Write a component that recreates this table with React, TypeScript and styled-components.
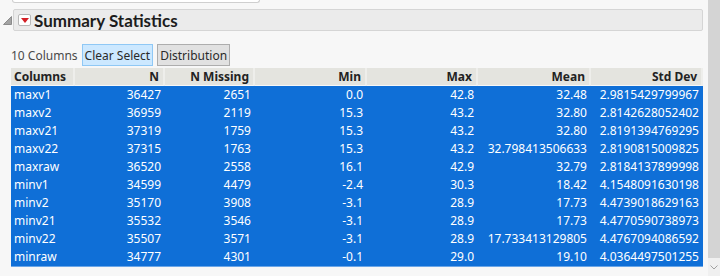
import * as React from 'react';
import styled, { createGlobalStyle } from 'styled-components';

const GlobalStyle = createGlobalStyle`
    html, body {
        margin: 0;
        padding: 0;
        background: #f7f7f7;
        font-family: 'Noto Sans', 'Open Sans', Arial, sans-serif;
    }
`;

const Window = styled.div`
    display: flex;
    flex-direction: row;
    width: 720px;
    height: 276px;
    overflow: hidden;
    background: #f7f7f7;
`;

const Main = styled.div`
    display: flex;
    flex-direction: column;
    width: 708px;
`;

const TopBox = styled.div`
    width: 246px;
    height: 2px;
    margin-left: 12px;
    background: #ffffff;
    border: 1px solid #cfcfcf;
    border-top: none;
    border-radius: 0 0 3px 3px;
`;

const OutlineRow = styled.div`
    display: flex;
    flex-direction: row;
    align-items: center;
    margin-top: 6px;
    padding-left: 3px;
    gap: 1px;
`;

const HeaderBar = styled.div`
    display: flex;
    align-items: center;
    gap: 3px;
    flex: 1;
    height: 20px;
    padding-left: 4px;
    background: #ebebeb;
    border: 1px solid #d5d5d5;
    border-radius: 2px;
    margin-right: 5px;
`;

const RedMenu = styled.div`
    display: flex;
    align-items: center;
    justify-content: center;
    width: 11px;
    height: 10px;
    background: #ffffff;
    border: 1px solid #b8b8b8;
    border-radius: 2px;
`;

const Title = styled.span`
    font-family: Lato, 'Noto Sans', sans-serif;
    font-size: 17px;
    font-weight: 700;
    color: #1c1c1c;
`;

const Content = styled.div`
    display: flex;
    flex-direction: column;
    padding-left: 11px;
    margin-top: 13px;
`;

const Toolbar = styled.div`
    display: flex;
    align-items: center;
    height: 22px;
`;

const Label = styled.span`
    font-size: 12px;
    color: #4a4a4a;
    margin-right: 4px;
`;

const ToolButton = styled.button<{ $active?: boolean }>`
    height: 22px;
    margin-right: 4px;
    padding: 0 2px;
    font-family: inherit;
    font-size: 12px;
    color: #2a2a2a;
    background: ${(p) => (p.$active ? '#cce8ff' : '#e1e1e1')};
    border: 1px solid ${(p) => (p.$active ? '#8fc8f5' : '#adadad')};
    border-radius: 0;
`;

const Grid = styled.div`
    display: grid;
    grid-template-columns: 64px 90px 90px 112px 111px 113px 112px;
    width: 692px;
    margin-top: 2px;
`;

const HeadCell = styled.div<{ $left?: boolean }>`
    height: 17px;
    line-height: 17px;
    padding: 0 4px 0 3px;
    font-size: 12px;
    font-weight: 700;
    color: #222;
    text-align: ${(p) => (p.$left ? 'left' : 'right')};
    background: #e4e4df;
    border-right: 2px solid #eeeeeb;
    border-bottom: 1px solid #f7f7f7;

    &:last-child {
        border-right: none;
    }
`;

const Cell = styled.div<{ $left?: boolean; $last?: boolean }>`
    height: 18px;
    line-height: 18px;
    padding: 0 4px 0 3px;
    font-size: 12px;
    color: #ffffff;
    white-space: nowrap;
    text-align: ${(p) => (p.$left ? 'left' : 'right')};
    background: #0f6fd7;
    border-bottom: ${(p) => (p.$last ? '1px solid #6aa6e8' : 'none')};
`;

const Scrollbar = styled.div`
    display: flex;
    flex-direction: column;
    width: 12px;
    background: #f0f0f0;
`;

const Thumb = styled.div`
    height: 258px;
    background: #d4d4d4;
`;

const ArrowSlot = styled.div`
    display: flex;
    align-items: center;
    justify-content: center;
    flex: 1;
`;

const headers = ['Columns', 'N', 'N Missing', 'Min', 'Max', 'Mean', 'Std Dev'];

const rows: string[][] = [
    ['maxv1', '36427', '2651', '0.0', '42.8', '32.48', '2.9815429799967'],
    ['maxv2', '36959', '2119', '15.3', '43.2', '32.80', '2.8142628052402'],
    ['maxv21', '37319', '1759', '15.3', '43.2', '32.80', '2.8191394769295'],
    ['maxv22', '37315', '1763', '15.3', '43.2', '32.798413506633', '2.8190815009825'],
    ['maxraw', '36520', '2558', '16.1', '42.9', '32.79', '2.8184137899998'],
    ['minv1', '34599', '4479', '-2.4', '30.3', '18.42', '4.1548091630198'],
    ['minv2', '35170', '3908', '-3.1', '28.9', '17.73', '4.4739018629163'],
    ['minv21', '35532', '3546', '-3.1', '28.9', '17.73', '4.4770590738973'],
    ['minv22', '35507', '3571', '-3.1', '28.9', '17.733413129805', '4.4767094086592'],
    ['minraw', '34777', '4301', '-0.1', '29.0', '19.10', '4.0364497501255'],
];

const App: React.FC = () => {
    return (
        <Window>
            <GlobalStyle />
            <Main>
                <TopBox />
                <OutlineRow>
                    <svg width="9" height="9" viewBox="0 0 9 9">
                        <polygon points="8.5,0.5 8.5,8.5 0.5,8.5" fill="#a3a3a3" stroke="#8c8c8c" strokeWidth="1" />
                    </svg>
                    <HeaderBar>
                        <RedMenu>
                            <svg width="8" height="5" viewBox="0 0 8 5">
                                <polygon points="0,0 8,0 4,5" fill="#d41f26" />
                            </svg>
                        </RedMenu>
                        <Title>Summary Statistics</Title>
                    </HeaderBar>
                </OutlineRow>
                <Content>
                    <Toolbar>
                        <Label>10 Columns</Label>
                        <ToolButton $active>Clear Select</ToolButton>
                        <ToolButton>Distribution</ToolButton>
                    </Toolbar>
                    <Grid>
                        {headers.map((h, i) => (
                            <HeadCell key={h} $left={i === 0}>
                                {h}
                            </HeadCell>
                        ))}
                        {rows.map((row, r) =>
                            row.map((v, c) => (
                                <Cell key={r + '-' + c} $left={c === 0} $last={r === rows.length - 1}>
                                    {v}
                                </Cell>
                            ))
                        )}
                    </Grid>
                </Content>
            </Main>
            <Scrollbar>
                <Thumb />
                <ArrowSlot>
                    <svg width="8" height="5" viewBox="0 0 8 5">
                        <polyline points="0.5,0.5 4,4 7.5,0.5" fill="none" stroke="#a0a0a0" strokeWidth="1" />
                    </svg>
                </ArrowSlot>
            </Scrollbar>
        </Window>
    );
};

export default App;
